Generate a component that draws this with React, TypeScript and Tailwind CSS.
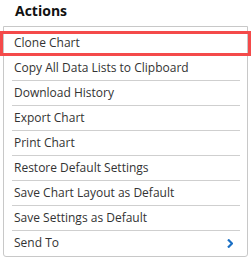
import React from "react";

const actions = [
  "Clone Chart",
  "Copy All Data Lists to Clipboard",
  "Download History",
  "Export Chart",
  "Print Chart",
  "Restore Default Settings",
  "Save Chart Layout as Default",
  "Save Settings as Default",
  "Send To",
];

const App: React.FC = () => {
  return (
    <div className="relative w-[252px] h-[262px] bg-white font-['Open_Sans',sans-serif] text-[#333]">
      <div className="h-[26px] pl-[15px] pt-[2px] text-[14px] font-bold leading-[18px] text-[#111]">
        Actions
      </div>
      <div className="ml-[3px] w-[245px] border border-[#c8c8c8] rounded-b-[3px] pt-[4px] pb-[1px]">
        {actions.map((label, i) => (
          <div key={label}>
            {i > 0 && <div className="ml-[8px] mr-[7px] h-px bg-[#cfcfcf]" />}
            <div className="flex items-center justify-between h-[24px] pl-[10px] pr-[14px] text-[12px]">
              <span>{label}</span>
              {label === "Send To" && (
                <svg width="6" height="9" viewBox="0 0 6 9">
                  <path d="M1 0.5 L5 4.5 L1 8.5" fill="none" stroke="#1a6fc4" strokeWidth="2.2" />
                </svg>
              )}
            </div>
          </div>
        ))}
      </div>
      {/* highlight annotation */}
      <div className="absolute left-0 top-[31px] w-[251px] h-[25px] border-[3px] border-[#f44a4a] pointer-events-none" />
    </div>
  );
};

export default App;
